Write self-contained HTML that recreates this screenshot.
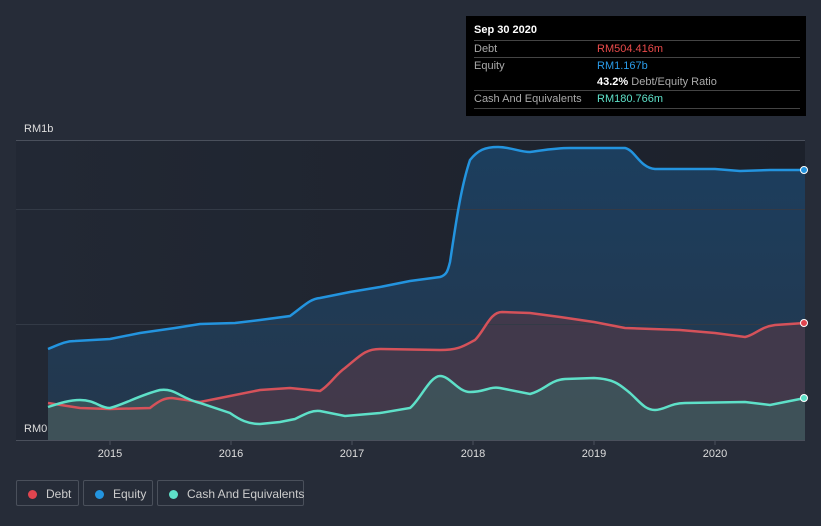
<!DOCTYPE html><html><head><style>
html,body{margin:0;width:821px;height:526px;overflow:hidden}
body{background:#262c38;font-family:"Liberation Sans",sans-serif;position:relative}
.tt{position:absolute;left:466px;top:16px;width:340px;height:100px;background:#000;color:#fff;font-size:11px}
.row{position:absolute;left:8px;width:326px;border-top:1px solid #444}
.lg{position:absolute;top:480px;height:26px;border:1px solid #4a505b;border-radius:2px;color:#ccc;font-size:12px;line-height:26px;box-sizing:border-box;white-space:nowrap}
.lg i{display:inline-block;width:9px;height:9px;border-radius:50%;margin:0 9px 0 11px;vertical-align:-1px}
</style></head><body>
<svg width="821" height="526" style="position:absolute;left:0;top:0">
<defs><linearGradient id="bg" x1="0" x2="1"><stop offset="0" stop-color="#222834"/><stop offset="1" stop-color="#1c212b"/></linearGradient>
<linearGradient id="eq" x1="0" y1="0" x2="0" y2="1"><stop offset="0" stop-color="#1c3e5e"/><stop offset="1" stop-color="#24374c"/></linearGradient></defs>
<rect x="16" y="140" width="789" height="300" fill="url(#bg)"/>
<path d="M48,349 C60,344 66,341 75,341 L110,339 L140,333 L175,328 L200,324 L235,323 L260,320 L290,316 C305,305 310,299 320,298 L350,292 L380,287 L410,281 L440,277 C447,275 448,270 450,262 C455,230 460,190 470,160 C478,150 485,147 498,147 C510,147 520,152 530,152 C545,150 555,148 570,148 L625,148 C635,150 640,168 655,169 L715,169 L740,171 L770,170 L805,170 L805,440 L48,440Z" fill="url(#eq)"/>
<path d="M48,403 L80,408 L110,409 L150,408 C160,400 165,398 172,398 L200,402 L230,396 L260,390 L290,388 L320,391 C330,385 335,375 345,368 C360,356 365,349 380,349 L440,350 C460,350 465,345 475,340 C485,330 490,312 502,312 L530,313 L560,317 L594,322 L625,328 L680,330 L715,333 L745,337 C755,335 760,327 775,325 L805,323 L805,440 L48,440Z" fill="#4a3a4a" opacity=".8"/>
<path d="M48,407 C60,403 70,400 80,400 C95,400 100,408 110,408 C125,404 140,395 160,390 C175,388 180,398 200,403 L230,413 C240,420 248,424 260,424 L280,422 L295,419 C305,414 312,410 320,411 L345,416 L380,413 L410,408 C420,400 430,376 440,376 C450,376 458,392 470,392 C485,392 490,386 500,388 L530,394 C545,390 550,380 565,379 L594,378 C615,379 620,385 630,393 C640,402 645,410 655,410 C665,410 670,403 685,403 L745,402 L770,405 L805,398 L805,440 L48,440Z" fill="#3d5a5e" opacity=".75"/>
<line x1="16" y1="140.5" x2="805" y2="140.5" stroke="#4a505c"/>
<line x1="16" y1="209.5" x2="805" y2="209.5" stroke="#333a46"/>
<line x1="16" y1="324.5" x2="805" y2="324.5" stroke="#333a46"/>
<line x1="16" y1="440.5" x2="805" y2="440.5" stroke="#4a505c"/>
<path d="M48,349 C60,344 66,341 75,341 L110,339 L140,333 L175,328 L200,324 L235,323 L260,320 L290,316 C305,305 310,299 320,298 L350,292 L380,287 L410,281 L440,277 C447,275 448,270 450,262 C455,230 460,190 470,160 C478,150 485,147 498,147 C510,147 520,152 530,152 C545,150 555,148 570,148 L625,148 C635,150 640,168 655,169 L715,169 L740,171 L770,170 L805,170" fill="none" stroke="#2394df" stroke-width="2.5"/>
<path d="M48,403 L80,408 L110,409 L150,408 C160,400 165,398 172,398 L200,402 L230,396 L260,390 L290,388 L320,391 C330,385 335,375 345,368 C360,356 365,349 380,349 L440,350 C460,350 465,345 475,340 C485,330 490,312 502,312 L530,313 L560,317 L594,322 L625,328 L680,330 L715,333 L745,337 C755,335 760,327 775,325 L805,323" fill="none" stroke="#d5525a" stroke-width="2.5"/>
<path d="M48,407 C60,403 70,400 80,400 C95,400 100,408 110,408 C125,404 140,395 160,390 C175,388 180,398 200,403 L230,413 C240,420 248,424 260,424 L280,422 L295,419 C305,414 312,410 320,411 L345,416 L380,413 L410,408 C420,400 430,376 440,376 C450,376 458,392 470,392 C485,392 490,386 500,388 L530,394 C545,390 550,380 565,379 L594,378 C615,379 620,385 630,393 C640,402 645,410 655,410 C665,410 670,403 685,403 L745,402 L770,405 L805,398" fill="none" stroke="#5ee0c8" stroke-width="2.5"/>
<circle cx="804" cy="170" r="3.5" fill="#2394df" stroke="#fff" stroke-width="1"/>
<circle cx="804" cy="323" r="3.5" fill="#e0454f" stroke="#fff" stroke-width="1"/>
<circle cx="804" cy="398" r="3.5" fill="#5ee0c8" stroke="#fff" stroke-width="1"/>
<g fill="#ddd" font-size="11" font-family="Liberation Sans"><text x="24" y="132">RM1b</text><text x="24" y="432">RM0</text>
<g text-anchor="middle"><text x="110" y="457">2015</text><text x="231" y="457">2016</text><text x="352" y="457">2017</text><text x="473" y="457">2018</text><text x="594" y="457">2019</text><text x="715" y="457">2020</text></g></g>
<g stroke="#4a505c"><line x1="110" y1="441" x2="110" y2="445"/><line x1="231" y1="441" x2="231" y2="445"/><line x1="352" y1="441" x2="352" y2="445"/><line x1="473" y1="441" x2="473" y2="445"/><line x1="594" y1="441" x2="594" y2="445"/><line x1="715" y1="441" x2="715" y2="445"/></g>
</svg>
<div class="tt">
<div style="position:absolute;left:8px;top:8px;font-weight:bold">Sep 30 2020</div>
<div class="row" style="top:24px;height:17px"><span style="position:absolute;top:2px;color:#aaa">Debt</span><span style="position:absolute;left:123px;top:2px;color:#e84a4a">RM504.416m</span></div>
<div class="row" style="top:41px;height:33px"><span style="position:absolute;top:2px;color:#aaa">Equity</span><span style="position:absolute;left:123px;top:2px;color:#2a9be8">RM1.167b</span><span style="position:absolute;left:123px;top:18px;white-space:nowrap"><b style="font-weight:bold">43.2%</b> <span style="color:#aaa">Debt/Equity Ratio</span></span></div>
<div class="row" style="top:74px;height:17px;border-bottom:1px solid #444"><span style="position:absolute;top:2px;color:#aaa">Cash And Equivalents</span><span style="position:absolute;left:123px;top:2px;color:#5ee0c8">RM180.766m</span></div>
</div>
<div class="lg" style="left:16px;width:63px"><i style="background:#e0454f"></i>Debt</div>
<div class="lg" style="left:83px;width:70px"><i style="background:#2394df"></i>Equity</div>
<div class="lg" style="left:157px;width:147px"><i style="background:#5ee0c8"></i>Cash And Equivalents</div>
</body></html>
